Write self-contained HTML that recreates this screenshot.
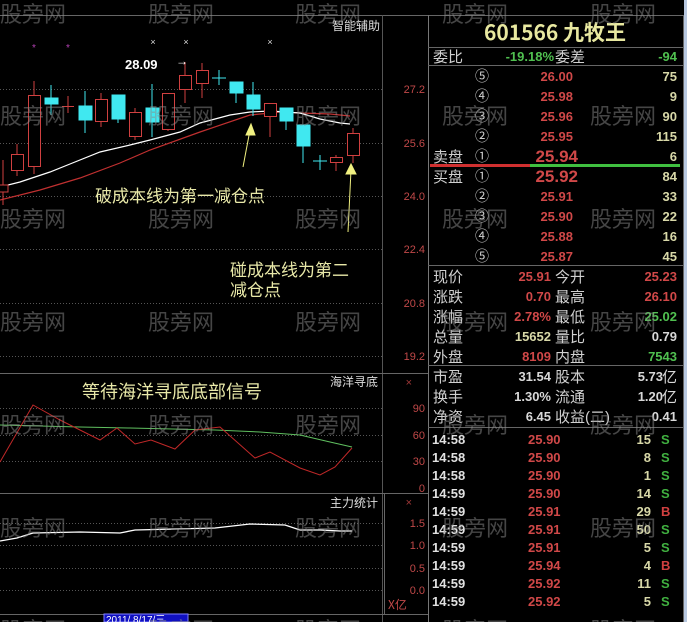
<!DOCTYPE html>
<html><head><meta charset="utf-8"><style>
html,body{margin:0;padding:0;background:#000;width:687px;height:622px;overflow:hidden}
svg{display:block}
text{font-family:"Liberation Sans","Noto Sans CJK SC",sans-serif}
.cn{font-family:"Noto Sans CJK SC","WenQuanYi Zen Hei",sans-serif}
</style></head><body>
<svg width="687" height="622" viewBox="0 0 687 622" xmlns="http://www.w3.org/2000/svg">
<rect width="687" height="622" fill="#000"/>
<line x1="0" y1="15.5" x2="683" y2="15.5" stroke="#666" stroke-width="1"/>
<line x1="382.5" y1="15" x2="382.5" y2="622" stroke="#555"/>
<line x1="428.5" y1="15" x2="428.5" y2="622" stroke="#777"/>
<line x1="683.5" y1="15" x2="683.5" y2="622" stroke="#666"/>
<rect x="684" y="0" width="3" height="622" fill="#b8c8e0"/>
<line x1="0" y1="373.5" x2="428" y2="373.5" stroke="#666"/>
<line x1="0" y1="493.5" x2="428" y2="493.5" stroke="#666"/>
<line x1="0" y1="614.5" x2="428" y2="614.5" stroke="#666"/>
<line x1="384.5" y1="493" x2="384.5" y2="614" stroke="#666"/>
<g stroke="#555" stroke-dasharray="1,2">
<line x1="0" y1="89.5" x2="382" y2="89.5"/><line x1="0" y1="143.5" x2="382" y2="143.5"/>
<line x1="0" y1="196.5" x2="382" y2="196.5"/><line x1="0" y1="249.5" x2="382" y2="249.5"/>
<line x1="0" y1="303.5" x2="382" y2="303.5"/><line x1="0" y1="356.5" x2="382" y2="356.5"/>
<line x1="0" y1="408.5" x2="382" y2="408.5"/><line x1="0" y1="435.5" x2="382" y2="435.5"/>
<line x1="0" y1="461.5" x2="382" y2="461.5"/>
<line x1="0" y1="523.5" x2="382" y2="523.5"/><line x1="0" y1="545.5" x2="382" y2="545.5"/>
<line x1="0" y1="568.5" x2="382" y2="568.5"/><line x1="0" y1="590.5" x2="382" y2="590.5"/>
</g>
<g fill="#c04848" font-size="11" text-anchor="end">
<text x="425" y="93">27.2</text><text x="425" y="147">25.6</text><text x="425" y="200">24.0</text>
<text x="425" y="253">22.4</text><text x="425" y="307">20.8</text><text x="425" y="360">19.2</text>
<text x="425" y="412">90</text><text x="425" y="439">60</text><text x="425" y="465">30</text><text x="425" y="492">0</text>
<text x="425" y="527">1.5</text><text x="425" y="549">1.0</text><text x="425" y="572">0.5</text><text x="425" y="594">0.0</text>
<text x="412" y="386" fill="#a03838">×</text><text x="412" y="506" fill="#a03838">×</text>
</g>
<text x="388" y="609" fill="#c04848" font-size="12" class="cn">X亿</text>
<g fill="#ddd" font-size="12" class="cn" text-anchor="end">
<text x="380" y="30">智能辅助</text><text x="378" y="386">海洋寻底</text><text x="378" y="507">主力统计</text>
</g>
<polyline fill="none" stroke="#c03030" stroke-width="1.2" points="0,200 40,190 80,178 120,163 150,150 200,132 250,115 280,112 300,113 330,114 350,116"/>
<polyline fill="none" stroke="#fff" stroke-width="1.2" points="0,187 20,182 50,172 70,164 100,152 130,145 150,140 180,132 200,123 230,115 250,112 270,111 300,113 320,119 340,123 350,124"/>
<g stroke="#d04040" fill="#000" stroke-width="1">
<line x1="3" y1="160" x2="3" y2="205"/><rect x="-2" y="185" width="10" height="7"/>
<line x1="17" y1="144" x2="17" y2="176"/><rect x="11.5" y="154.5" width="12" height="16"/>
<line x1="34" y1="81" x2="34" y2="174"/><rect x="28.5" y="95.5" width="12" height="71"/>
<line x1="68" y1="96" x2="68" y2="113"/><line x1="62" y1="106.5" x2="74" y2="106.5"/>
<line x1="101" y1="93" x2="101" y2="127"/><rect x="95.5" y="99.5" width="12" height="22"/>
<line x1="135" y1="108" x2="135" y2="140"/><rect x="129.5" y="112.5" width="12" height="24"/>
<line x1="168" y1="93" x2="168" y2="131"/><rect x="162.5" y="93.5" width="12" height="36"/>
<line x1="185" y1="62" x2="185" y2="103"/><rect x="179.5" y="75.5" width="12" height="14"/>
<line x1="202" y1="63" x2="202" y2="98"/><rect x="196.5" y="70.5" width="12" height="13"/>
<line x1="270" y1="103" x2="270" y2="137"/><rect x="264.5" y="103.5" width="12" height="13"/>
<line x1="336" y1="155" x2="336" y2="171"/><rect x="330.5" y="157.5" width="12" height="5"/>
<line x1="353" y1="128" x2="353" y2="163"/><rect x="347.5" y="133.5" width="12" height="22"/>
</g>
<g stroke="#40e8f0" fill="#40e8f0" stroke-width="1">
<line x1="51" y1="85" x2="51" y2="115"/><rect x="45" y="98" width="13" height="6"/>
<line x1="85" y1="91" x2="85" y2="133"/><rect x="79" y="106" width="13" height="14"/>
<line x1="118" y1="95" x2="118" y2="123"/><rect x="112" y="95" width="13" height="24"/>
<line x1="152" y1="84" x2="152" y2="137"/><rect x="146" y="108" width="13" height="14"/>
<line x1="219" y1="70" x2="219" y2="85"/><line x1="212" y1="78" x2="226" y2="78"/>
<line x1="236" y1="82" x2="236" y2="103"/><rect x="230" y="82" width="13" height="11"/>
<line x1="253" y1="82" x2="253" y2="116"/><rect x="247" y="95" width="13" height="14"/>
<line x1="286" y1="108" x2="286" y2="130"/><rect x="280" y="108" width="13" height="13"/>
<line x1="303" y1="125" x2="303" y2="163"/><rect x="297" y="125" width="13" height="21"/>
<line x1="320" y1="155" x2="320" y2="170"/><line x1="313" y1="161" x2="327" y2="161"/>
</g>
<g fill="#ddd" font-size="9" text-anchor="middle"><text x="153" y="45">×</text><text x="186" y="45">×</text><text x="270" y="45">×</text></g>
<g fill="#b040b0" font-size="10" text-anchor="middle"><text x="34" y="51">*</text><text x="68" y="51">*</text></g>
<text x="125" y="69" fill="#fff" font-size="13" font-weight="bold">28.09</text>
<text x="176" y="65" fill="#fff" font-size="12">→</text>
<g stroke="#f0f080" fill="#f0f080" stroke-width="1">
<line x1="243" y1="167" x2="250" y2="130"/><polygon points="251,124 246,135 255,135"/>
<line x1="348" y1="232" x2="351" y2="170"/><polygon points="351,164 346,174 356,174"/>
</g>
<g fill="#e8e8a8" font-size="17" class="cn">
<text x="95" y="202">破成本线为第一减仓点</text>
<text x="230" y="276">碰成本线为第二</text>
<text x="230" y="296">减仓点</text>
<text x="82" y="398" font-size="18">等待海洋寻底底部信号</text>
</g>
<polyline fill="none" stroke="#60c060" stroke-width="1" points="0,425 80,427 130,428 215,430 260,432 300,435 330,442 352,447"/>
<polyline fill="none" stroke="#c02828" stroke-width="1" points="0,462 33,405 60,420 86,433 100,440 117,428 135,444 151,440 175,449 195,430 220,427 255,458 270,452 300,468 320,475 335,467 352,448"/>
<polyline fill="none" stroke="#fff" stroke-width="1.3" points="0,541 17,538 33,533 80,532 120,533 135,530 215,528 250,524 285,525 300,530 320,530 340,531 352,531"/>
<rect x="104" y="614" width="84" height="8" fill="#1010c0" stroke="#8080ff"/>
<text x="106" y="623" fill="#fff" font-size="10">2011/ 8/17/三</text>
<text x="555" y="40" fill="#e8e8a0" font-size="21" font-weight="bold" text-anchor="middle" class="cn">601566 九牧王</text>
<g stroke="#666"><line x1="428" y1="47.5" x2="683" y2="47.5"/><line x1="428" y1="65.5" x2="683" y2="65.5"/>
<line x1="428" y1="265.5" x2="683" y2="265.5"/><line x1="428" y1="365.5" x2="683" y2="365.5"/><line x1="428" y1="427.5" x2="683" y2="427.5"/></g>
<rect x="430" y="164" width="100" height="3" fill="#d03030"/><rect x="530" y="164" width="150" height="3" fill="#40c040"/>
<g font-size="15" class="cn" fill="#d0d0d0">
<text x="433" y="62">委比</text><text x="555" y="62">委差</text>
<text x="433" y="162">卖盘</text><text x="433" y="182">买盘</text>
<text x="433" y="282">现价</text><text x="555" y="282">今开</text>
<text x="433" y="302">涨跌</text><text x="555" y="302">最高</text>
<text x="433" y="322">涨幅</text><text x="555" y="322">最低</text>
<text x="433" y="342">总量</text><text x="555" y="342">量比</text>
<text x="433" y="362">外盘</text><text x="555" y="362">内盘</text>
<text x="433" y="382">市盈</text><text x="555" y="382">股本</text>
<text x="433" y="402">换手</text><text x="555" y="402">流通</text>
<text x="433" y="422">净资</text><text x="555" y="422">收益(二)</text>
</g>
<g font-size="14" fill="#d0d0d0" class="cn" text-anchor="middle">
<text x="482" y="81">⑤</text><text x="482" y="101">④</text><text x="482" y="121">③</text><text x="482" y="141">②</text><text x="482" y="161">①</text>
<text x="482" y="181">①</text><text x="482" y="201">②</text><text x="482" y="221">③</text><text x="482" y="241">④</text><text x="482" y="261">⑤</text>
</g>
<g font-size="13" font-weight="bold" text-anchor="end">
<text x="554" y="61" fill="#50c050">-19.18%</text><text x="677" y="61" fill="#50c050">-94</text>
<g fill="#d04848"><text x="573" y="81">26.00</text><text x="573" y="101">25.98</text><text x="573" y="121">25.96</text><text x="573" y="141">25.95</text>
<text x="578" y="162" font-size="17">25.94</text><text x="578" y="182" font-size="17">25.92</text>
<text x="573" y="201">25.91</text><text x="573" y="221">25.90</text><text x="573" y="241">25.88</text><text x="573" y="261">25.87</text></g>
<g fill="#d8d8a8"><text x="677" y="81">75</text><text x="677" y="101">9</text><text x="677" y="121">90</text><text x="677" y="141">115</text><text x="677" y="161">6</text>
<text x="677" y="181">84</text><text x="677" y="201">33</text><text x="677" y="221">22</text><text x="677" y="241">16</text><text x="677" y="261">45</text></g>
<text x="551" y="281" fill="#d04848">25.91</text><text x="677" y="281" fill="#d04848">25.23</text>
<text x="551" y="301" fill="#d04848">0.70</text><text x="677" y="301" fill="#d04848">26.10</text>
<text x="551" y="321" fill="#d04848">2.78%</text><text x="677" y="321" fill="#50c050">25.02</text>
<text x="551" y="341" fill="#d8d8a8">15652</text><text x="677" y="341" fill="#d8d8d8">0.79</text>
<text x="551" y="361" fill="#d04848">8109</text><text x="677" y="361" fill="#50c050">7543</text>
<g fill="#d8d8d8"><text x="551" y="381">31.54</text><text x="551" y="401">1.30%</text><text x="551" y="421">6.45</text><text x="677" y="421">0.41</text></g>
</g>
<g font-size="13" font-weight="bold" fill="#d8d8d8" text-anchor="end"><text x="663" y="381">5.73</text><text x="663" y="401">1.20</text></g>
<g font-size="15" class="cn" fill="#d8d8d8"><text x="662" y="382">亿</text><text x="662" y="402">亿</text></g>
<g font-size="13" font-weight="bold">
<g fill="#e0e0e0">
<text x="432" y="444">14:58</text><text x="432" y="462">14:58</text><text x="432" y="480">14:58</text><text x="432" y="498">14:59</text><text x="432" y="516">14:59</text>
<text x="432" y="534">14:59</text><text x="432" y="552">14:59</text><text x="432" y="570">14:59</text><text x="432" y="588">14:59</text><text x="432" y="606">14:59</text></g>
<g fill="#d04848"><text x="528" y="444">25.90</text><text x="528" y="462">25.90</text><text x="528" y="480">25.90</text><text x="528" y="498">25.90</text><text x="528" y="516">25.91</text>
<text x="528" y="534">25.91</text><text x="528" y="552">25.91</text><text x="528" y="570">25.94</text><text x="528" y="588">25.92</text><text x="528" y="606">25.92</text></g>
<g fill="#d8d8a8" text-anchor="end"><text x="651" y="444">15</text><text x="651" y="462">8</text><text x="651" y="480">1</text><text x="651" y="498">14</text><text x="651" y="516">29</text>
<text x="651" y="534">50</text><text x="651" y="552">5</text><text x="651" y="570">4</text><text x="651" y="588">11</text><text x="651" y="606">5</text></g>
<g><text x="661" y="444" fill="#40b040">S</text><text x="661" y="462" fill="#40b040">S</text><text x="661" y="480" fill="#40b040">S</text><text x="661" y="498" fill="#40b040">S</text><text x="661" y="516" fill="#d04040">B</text>
<text x="661" y="534" fill="#40b040">S</text><text x="661" y="552" fill="#40b040">S</text><text x="661" y="570" fill="#d04040">B</text><text x="661" y="588" fill="#40b040">S</text><text x="661" y="606" fill="#40b040">S</text></g>
</g>
<g fill="#8a8a8a" fill-opacity="0.5" font-size="22" class="cn">
<text x="0" y="22">股旁网</text><text x="148" y="22">股旁网</text><text x="295" y="22">股旁网</text><text x="442" y="22">股旁网</text><text x="590" y="22">股旁网</text>
<text x="0" y="124">股旁网</text><text x="148" y="124">股旁网</text><text x="295" y="124">股旁网</text><text x="442" y="124">股旁网</text><text x="590" y="124">股旁网</text>
<text x="0" y="227">股旁网</text><text x="148" y="227">股旁网</text><text x="295" y="227">股旁网</text><text x="442" y="227">股旁网</text><text x="590" y="227">股旁网</text>
<text x="0" y="330">股旁网</text><text x="148" y="330">股旁网</text><text x="295" y="330">股旁网</text><text x="442" y="330">股旁网</text><text x="590" y="330">股旁网</text>
<text x="0" y="433">股旁网</text><text x="148" y="433">股旁网</text><text x="295" y="433">股旁网</text><text x="442" y="433">股旁网</text><text x="590" y="433">股旁网</text>
<text x="0" y="536">股旁网</text><text x="148" y="536">股旁网</text><text x="295" y="536">股旁网</text><text x="442" y="536">股旁网</text><text x="590" y="536">股旁网</text>
<text x="0" y="638">股旁网</text><text x="148" y="638">股旁网</text><text x="295" y="638">股旁网</text><text x="442" y="638">股旁网</text><text x="590" y="638">股旁网</text>
</g>
</svg>
</body></html>
